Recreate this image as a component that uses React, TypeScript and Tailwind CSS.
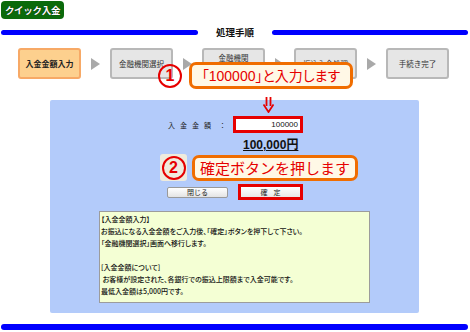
import React from "react";

const jp = "font-['Noto_Sans_CJK_JP',sans-serif]";

function Step({ label, active }: { label: string; active?: boolean }) {
  return (
    <div
      className={
        "w-[63px] h-[31px] rounded-[3px] border-2 flex flex-col items-center justify-center leading-[11px] whitespace-nowrap " +
        (active
          ? "bg-[#fdd08e] border-[#f7a966] font-bold text-[#222] text-[8px]"
          : "bg-[#e6e6e6] border-[#b8b8b8] text-[#333] text-[7.5px]")
      }
    >
      <span>{label}</span>
    </div>
  );
}

function Arrow() {
  return (
    <div className="w-[29px] h-[31px] flex items-center justify-center">
      <svg width="9" height="12" viewBox="0 0 9 12">
        <path d="M0 0 L9 6 L0 12 Z" fill="#a9a9a9" />
      </svg>
    </div>
  );
}

function Circled({ n }: { n: string }) {
  return (
    <div className="w-[24px] h-[24px] rounded-full border-[2.5px] border-[#e60000] flex items-center justify-center text-[#e60000] font-bold text-[16px] leading-none font-['Liberation_Sans',sans-serif]">
      {n}
    </div>
  );
}

export default function App() {
  return (
    <div className={"relative w-[470px] h-[332px] bg-white overflow-hidden flex flex-col " + jp}>
      {/* badge */}
      <div className="ml-[1px] mt-[1px] w-[63px] h-[18px] rounded-[4px] bg-[#0b6a0b] flex items-center justify-center text-white font-bold text-[9.5px] tracking-[-0.3px] whitespace-nowrap [text-shadow:0_0_1px_#000]">
        クイック入金
      </div>

      {/* title row */}
      <div className="mt-[8px] h-[10px] flex items-center">
        <div className="ml-[1px] w-[197px] h-[5px] rounded-full bg-[#0000ff]" />
        <div className="w-[74px] text-center text-[9.5px] font-bold text-[#111] leading-[10px]">処理手順</div>
        <div className="w-[196px] h-[5px] rounded-full bg-[#0000ff]" />
      </div>

      {/* steps */}
      <div className="mt-[11px] ml-[18px] flex">
        <Step label="入金金額入力" active />
        <Arrow />
        <Step label="金融機関選択" />
        <Arrow />
        <div className="w-[63px] h-[31px] rounded-[3px] border-2 bg-[#e6e6e6] border-[#b8b8b8] text-[#333] text-[7.5px] flex flex-col items-center pt-[2px] leading-[11px]">
          <span>金融機関</span>
          <span>入金指示</span>
        </div>
        <Arrow />
        <Step label="振込入金処理" />
        <Arrow />
        <Step label="手続き完了" />
      </div>

      {/* panel */}
      <div className="mt-[21px] ml-[50px] w-[369px] h-[213px] bg-[#b3cbfa] rounded-[2px] flex flex-col">
        <div className="mt-[16px] flex items-center">
          <div className="ml-[118px] w-[65px] text-[7px] text-[#222] leading-[10px] whitespace-nowrap flex">
            <span className="tracking-[5px]">入金金額</span>
            <span className="ml-[3px]">：</span>
          </div>
          <div className="w-[70px] h-[17px] border-[3px] border-[#e60000] bg-white flex items-center justify-end pr-[2px] font-['Liberation_Sans',sans-serif] text-[8px] text-[#111]">
            100000
          </div>
        </div>
        <div className="mt-[5px] ml-[193px] text-[12px] leading-[15px] font-bold underline text-[#111] font-['Liberation_Sans','Noto_Sans_CJK_JP',sans-serif]">
          100,000円
        </div>
        {/* callout 2 */}
        <div className="mt-[1px] ml-[110px] flex items-center gap-[5px]">
          <div className="w-[27px] h-[27px] rounded-[3px] bg-[#efebdd] flex items-center justify-center">
            <Circled n="2" />
          </div>
          <div className="w-[166px] h-[26px] rounded-[7px] border-[3px] border-[#f06d00] bg-[#fff8e6] flex items-center justify-center text-[#e60000] text-[15px] leading-none whitespace-nowrap">
            確定ボタンを押します
          </div>
        </div>
        {/* buttons */}
        <div className="mt-[3px] flex items-center">
          <div className="ml-[117px] w-[61px] h-[11px] rounded-[2px] border border-[#9a9a9a] bg-gradient-to-b from-white to-[#e4e4e4] flex items-center justify-center text-[7px] text-[#222] leading-none">
            閉じる
          </div>
          <div className="ml-[10px] w-[65px] h-[16px] border-[3px] border-[#e60000] bg-white flex items-center justify-center">
            <div className="w-full h-full bg-gradient-to-b from-white to-[#e8e8e8] flex items-center justify-center text-[7px] text-[#222] leading-none tracking-[6px] pl-[6px]">
              確定
            </div>
          </div>
        </div>
        {/* info box */}
        <div className="mt-[11px] ml-[49px] w-[271px] h-[92px] bg-[#f4ffd4] border border-[#9c9c9c] pl-[1px] pt-[1px] text-[7px] font-medium leading-[12px] text-[#111] whitespace-nowrap [font-feature-settings:'palt']">
          <div>【入金金額入力】</div>
          <div>お振込になる入金金額をご入力後、「確定」ボタンを押下して下さい。</div>
          <div>「金融機関選択」画面へ移行します。</div>
          <div className="h-[12px]" />
          <div>[入金金額について]</div>
          <div>&nbsp;お客様が設定された、各銀行での振込上限額まで入金可能です。</div>
          <div>最低入金額は5,000円です。</div>
        </div>
      </div>

      {/* bottom line */}
      <div className="mt-[11px] ml-[1px] w-[467px] h-[6px] rounded-full bg-[#0000ff]" />

      {/* callout 1 overlay */}
      <div className="absolute left-[158px] top-[62px] flex items-center gap-[7px] h-[27px]">
        <Circled n="1" />
        <div className="w-[164px] h-[27px] rounded-[7px] border-[3px] border-[#f06d00] bg-[#fff8e6] flex items-center justify-center text-[#e60000] text-[14px] leading-none whitespace-nowrap [font-feature-settings:'palt'] font-['Liberation_Sans','Noto_Sans_CJK_JP',sans-serif]">
          「100000」と入力します
        </div>
      </div>

      {/* down arrow overlay */}
      <svg className="absolute left-[263px] top-[97px]" width="11" height="16" viewBox="0 0 11 16">
        <path d="M3.5 0 V9 M7.5 0 V9" stroke="#e60000" strokeWidth="1.8" />
        <path d="M0.5 7.5 L5.5 15 L10.5 7.5" stroke="#e60000" strokeWidth="1.8" fill="none" />
      </svg>
    </div>
  );
}
